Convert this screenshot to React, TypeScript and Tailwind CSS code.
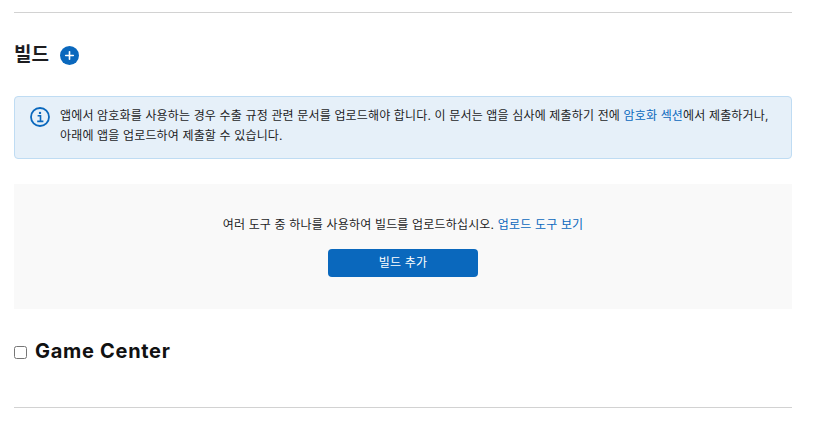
import { Plus } from "lucide-react"

function InfoIcon() {
  return (
    <svg width="20" height="20" viewBox="0 0 20 20" fill="none" className="shrink-0">
      <circle cx="10" cy="10" r="9" stroke="#0a68bd" strokeWidth="1.8" />
      <circle cx="10" cy="5.9" r="1.2" fill="#0a68bd" />
      <path d="M7.6 8.7H10.5V14.2M7.2 14.4H13.4" stroke="#0a68bd" strokeWidth="1.6" />
    </svg>
  )
}

export default function App() {
  return (
    <div className="w-[822px] h-[425px] overflow-hidden bg-white pl-[14px] pt-3 font-['Inter','Noto_Sans_CJK_KR',sans-serif] text-[#1d1d1f]">
      <div className="w-[778px]">
        <div className="h-px bg-[#d2d2d2]" />

        <div className="flex items-center gap-[11px] mt-[30px] h-[24px]">
          <h2 className="text-[19px] font-semibold leading-[24px]">빌드</h2>
          <span className="flex items-center justify-center w-[19px] h-[19px] rounded-full bg-[#0a68bd] text-white">
            <Plus size={13} strokeWidth={3} />
          </span>
        </div>

        <div className="flex gap-[10px] mt-[29px] h-[63px] pl-[15px] pr-3 pt-[9px] rounded-[4px] border border-[#bfdcf3] bg-[#e6f0f9]">
          <div className="pt-[1px]">
            <InfoIcon />
          </div>
          <p className="text-[12px] leading-[20px] tracking-[0.15px]">
            앱에서 암호화를 사용하는 경우 수출 규정 관련 문서를 업로드해야 합니다. 이 문서는 앱을 심사에 제출하기 전에{" "}
            <span className="text-[#0a68bd]">암호화 섹션</span>에서 제출하거나,
            <br />
            아래에 앱을 업로드하여 제출할 수 있습니다.
          </p>
        </div>

        <div className="flex flex-col items-center mt-[25px] h-[125px] pt-[30px] bg-[#f9f9f9]">
          <p className="text-[12px] leading-[21px] tracking-[0.17px]">
            여러 도구 중 하나를 사용하여 빌드를 업로드하십시오.{" "}
            <span className="text-[#0a68bd]">업로드 도구 보기</span>
          </p>
          <button className="mt-[14px] w-[150px] h-[28px] rounded-[4px] bg-[#0a68bd] text-white text-[12px] tracking-[0.2px]">
            빌드 추가
          </button>
        </div>

        <div className="flex items-center gap-[8px] mt-[30px] h-[24px]">
          <input type="checkbox" className="w-[13px] h-[13px] m-0 translate-y-[1px]" />
          <h2 className="font-['Inter',sans-serif] text-[20px] font-bold leading-[24px] tracking-[0.7px] text-[#111]">Game Center</h2>
        </div>

        <div className="h-px bg-[#d2d2d2] mt-[44px]" />
      </div>
    </div>
  )
}
